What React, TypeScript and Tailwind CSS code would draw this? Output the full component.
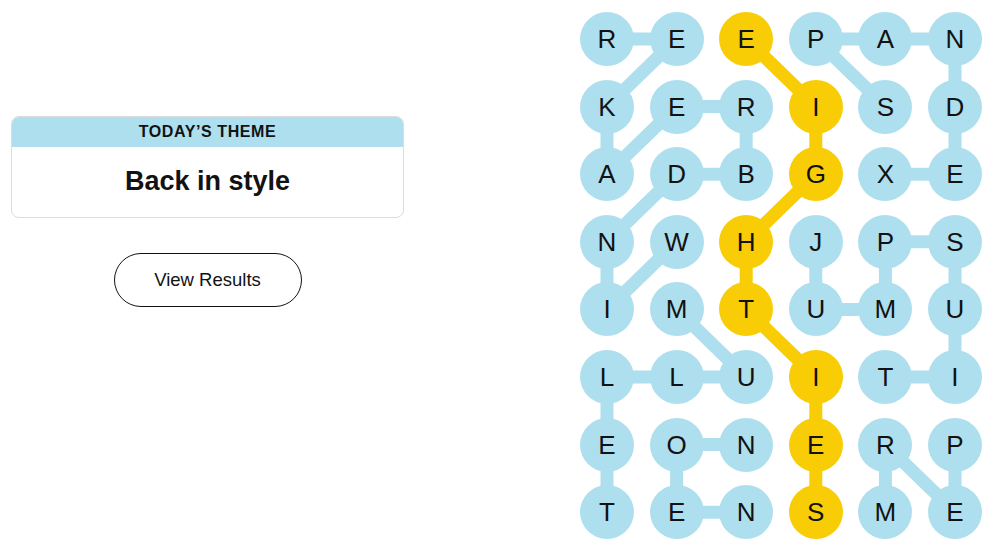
const board = [
  ["R", "E", "E", "P", "A", "N"],
  ["K", "E", "R", "I", "S", "D"],
  ["A", "D", "B", "G", "X", "E"],
  ["N", "W", "H", "J", "P", "S"],
  ["I", "M", "T", "U", "M", "U"],
  ["L", "L", "U", "I", "T", "I"],
  ["E", "O", "N", "E", "R", "P"],
  ["T", "E", "N", "S", "M", "E"],
];

// words found, as [row, col] paths
const words: number[][][] = [
  [[3, 1], [4, 0], [3, 0], [2, 1], [2, 2], [1, 2], [1, 1], [2, 0], [1, 0], [0, 1], [0, 0]],
  [[1, 4], [0, 3], [0, 4], [0, 5], [1, 5], [2, 5], [2, 4]],
  [[3, 3], [4, 3], [4, 4], [3, 4], [3, 5], [4, 5], [5, 5], [5, 4]],
  [[4, 1], [5, 2], [5, 1], [5, 0], [6, 0], [7, 0]],
  [[7, 2], [7, 1], [6, 1], [6, 2]],
  [[6, 5], [7, 5], [6, 4], [7, 4]],
];

const spangram: number[][] = [[0, 2], [1, 3], [2, 3], [3, 2], [4, 2], [5, 3], [6, 3], [7, 3]];

const SIZE = 54;
const PITCH_X = 69.6;
const PITCH_Y = 67.6;

const cx = (c: number) => SIZE / 2 + c * PITCH_X;
const cy = (r: number) => SIZE / 2 + r * PITCH_Y;

const isSpan = (r: number, c: number) => spangram.some(([a, b]) => a === r && b === c);

const Path = ({ cells, color }: { cells: number[][]; color: string }) => (
  <polyline
    points={cells.map(([r, c]) => `${cx(c)},${cy(r)}`).join(" ")}
    fill="none"
    stroke={color}
    strokeWidth={13}
    strokeLinejoin="round"
    strokeLinecap="round"
  />
);

const Board = () => {
  return (
    <div className="relative">
      <svg className="absolute inset-0" width="402" height="527" aria-hidden="true">
        {words.map((w, i) => (
          <Path key={i} cells={w} color="#aedfee" />
        ))}
        <Path cells={spangram} color="#f8cd05" />
      </svg>
      <div className="relative grid grid-cols-[repeat(6,54px)] gap-x-[15.6px] gap-y-[13.6px]">
        {board.map((row, r) =>
          row.map((letter, c) => (
            <button
              key={`${r}-${c}`}
              className={`flex h-[54px] w-[54px] items-center justify-center rounded-full text-[26px] leading-none text-[#121212] ${
                isSpan(r, c) ? "bg-[#f8cd05]" : "bg-[#aedfee]"
              }`}
            >
              {letter}
            </button>
          ))
        )}
      </div>
    </div>
  );
};

export default function App() {
  return (
    <div className="flex h-[557px] w-[991px] bg-white font-['Liberation_Sans',Arial,sans-serif]">
      <div className="flex w-[415px] flex-col items-center pt-[116px]">
        <div className="w-[393px] overflow-hidden rounded-lg border border-[#dcdcdc]">
          <div className="flex h-[30px] items-center justify-center bg-[#aedfee] text-[16px] font-bold tracking-[0.6px] text-[#121212]">
            TODAY’S THEME
          </div>
          <div className="flex h-[70px] items-center justify-center pb-[2px] text-[27px] font-bold text-[#121212]">
            Back in style
          </div>
        </div>
        <button className="mt-[35px] h-[54px] w-[188px] rounded-full border border-[#121212] text-[18.5px] text-[#121212]">
          View Results
        </button>
      </div>
      <div className="ml-[165px] pt-[12px]">
        <Board />
      </div>
    </div>
  );
}
